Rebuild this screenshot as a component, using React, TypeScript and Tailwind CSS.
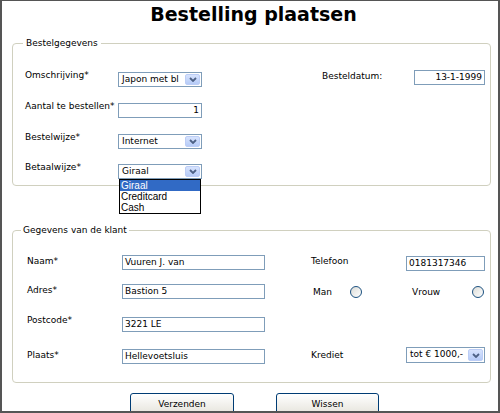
import React from "react";

const Arrow = () => (
  <div className="w-[15px] m-[1px] ml-0 flex items-center justify-center rounded-[2px] bg-gradient-to-b from-[#d7e3fd] to-[#b6cbf7] border border-[#bccdf6]">
    <svg width="8" height="5" viewBox="0 0 8 5">
      <path d="M1 1 L4 4 L7 1" fill="none" stroke="#4d6185" strokeWidth="1.8" />
    </svg>
  </div>
);

interface SelectProps {
  value: string;
  className?: string;
}

const Select: React.FC<SelectProps> = ({ value, className }) => (
  <div className={`flex h-[15px] border border-[#7f9db9] bg-white ${className ?? ""}`}>
    <div className="flex-1 overflow-hidden whitespace-nowrap pl-[3px] leading-[13px]">{value}</div>
    <Arrow />
  </div>
);

const Input: React.FC<{ value: string; className?: string; right?: boolean }> = ({ value, className, right }) => (
  <div
    className={`h-[15px] border border-[#7f9db9] bg-white px-[2px] leading-[13px] whitespace-nowrap overflow-hidden ${right ? "text-right" : ""} ${className ?? ""}`}
  >
    {value}
  </div>
);

const Radio = ({ className }: { className?: string }) => (
  <div className={`w-[12px] h-[12px] rounded-full border border-[#1c5180] bg-gradient-to-br from-[#dcdcd7] to-white ${className ?? ""}`} />
);

export default function App() {
  return (
    <div className="w-[500px] h-[413px] overflow-hidden bg-white border-t border-l-2 border-r-2 border-b-2 border-[#555] font-['DejaVu_Sans',sans-serif] text-[9px] text-black">
      <h1 className="text-center font-bold text-[19px] leading-[22px] pt-[2px] pl-[7px]">Bestelling plaatsen</h1>

      {/* Bestelgegevens */}
      <fieldset className="ml-[10px] mt-[13px] w-[479px] border border-[#d0d0bf] rounded-[4px] pb-[6px]">
        <legend className="ml-[10px] px-[3px] leading-[11px]">Bestelgegevens</legend>
        <div className="pl-[12px] pt-[21px]">
          <div className="flex items-start h-[31px]">
            <div className="w-[93px] leading-[11px]">Omschrijving*</div>
            <Select value="Japon met bl" className="w-[84px] mt-[2px]" />
            <div className="ml-[120px] w-[92px] leading-[11px] mt-[1px]">Besteldatum:</div>
            <Input value="13-1-1999" right className="w-[71px] h-[14px]" />
          </div>
          <div className="flex items-start h-[31px]">
            <div className="w-[93px] leading-[11px]">Aantal te bestellen*</div>
            <Input value="1" right className="w-[84px] mt-[2px]" />
          </div>
          <div className="flex items-start h-[30px]">
            <div className="w-[93px] leading-[11px]">Bestelwijze*</div>
            <Select value="Internet" className="w-[84px] mt-[2px]" />
          </div>
          <div className="flex items-start h-[17px]">
            <div className="w-[93px] leading-[11px]">Betaalwijze*</div>
            <div className="relative mt-[2px]">
              <Select value="Giraal" className="w-[84px]" />
              <div className="absolute left-[1px] top-full w-[82px] border border-black bg-white font-['Liberation_Sans',sans-serif] text-[10px] leading-[11px] z-10">
                <div className="bg-[#316ac5] text-white pl-[1px]">Giraal</div>
                <div className="pl-[1px]">Creditcard</div>
                <div className="pl-[1px]">Cash</div>
              </div>
            </div>
          </div>
        </div>
      </fieldset>

      {/* Gegevens van de klant */}
      <fieldset className="ml-[10px] mt-[39px] w-[479px] border border-[#d0d0bf] rounded-[4px] pb-[18px]">
        <legend className="ml-[8px] px-[2px] leading-[11px]">Gegevens van de klant</legend>
        <div className="pl-[14px] pt-[19px]">
          <div className="flex items-start h-[29px]">
            <div className="w-[95px] leading-[11px] mt-[1px]">Naam*</div>
            <Input value="Vuuren J. van" className="w-[143px]" />
            <div className="ml-[46px] w-[95px] leading-[11px] mt-[1px]">Telefoon</div>
            <Input value="0181317346" className="w-[79px] mt-[1px]" />
          </div>
          <div className="flex items-start h-[33px]">
            <div className="w-[95px] leading-[11px] mt-[1px]">Adres*</div>
            <Input value="Bastion 5" className="w-[143px]" />
            <div className="ml-[48px] w-[37px] leading-[11px] mt-[3px]">Man</div>
            <Radio className="mt-[2px]" />
            <div className="ml-[50px] w-[60px] leading-[11px] mt-[3px]">Vrouw</div>
            <Radio className="mt-[2px]" />
          </div>
          <div className="flex items-start h-[32px]">
            <div className="w-[95px] leading-[11px] -mt-[2px]">Postcode*</div>
            <Input value="3221 LE" className="w-[143px]" />
          </div>
          <div className="flex items-start h-[15px]">
            <div className="w-[95px] leading-[11px] mt-[1px]">Plaats*</div>
            <Input value="Hellevoetsluis" className="w-[143px]" />
            <div className="ml-[46px] w-[95px] leading-[11px] mt-[1px]">Krediet</div>
            <Select value="tot € 1000,-" className="w-[79px] h-[16px] -mt-[2px]" />
          </div>
        </div>
      </fieldset>

      <div className="flex mt-[10px]">
        <button className="ml-[128px] w-[104px] h-[22px] border border-[#003c74] rounded-[3px] bg-gradient-to-b from-white to-[#e6e4dc] text-[9px] leading-[20px]">
          Verzenden
        </button>
        <button className="ml-[42px] w-[103px] h-[22px] border border-[#003c74] rounded-[3px] bg-gradient-to-b from-white to-[#e6e4dc] text-[9px] leading-[20px]">
          Wissen
        </button>
      </div>
    </div>
  );
}
